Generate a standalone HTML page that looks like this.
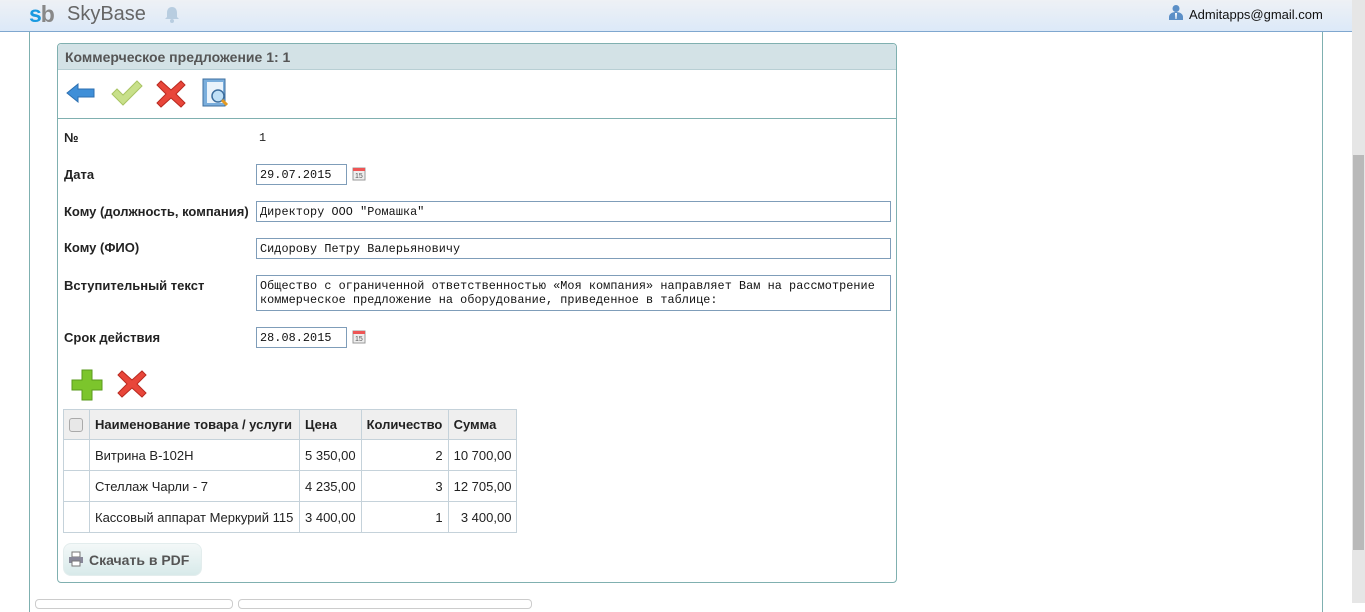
<!DOCTYPE html>
<html><head><meta charset="utf-8"><style>
*{margin:0;padding:0;box-sizing:border-box}
body{width:1365px;height:603px;overflow:hidden;background:#fff;font-family:"Liberation Sans",Arial,sans-serif;position:relative;font-size:13px;color:#222}
.hdr{position:absolute;left:0;top:0;width:1352px;height:32px;background:linear-gradient(#eef1f5,#dce9f8);border-bottom:1px solid #7fa7cf}
.abs{position:absolute}
.sb{position:absolute;right:0;top:0;width:13px;height:603px;background:#e6e6e6}
.thumb{position:absolute;right:1px;top:155px;width:11px;height:395px;background:#b9b9b9}
.outer{position:absolute;left:29px;top:32px;width:1294px;height:580px;border-left:1px solid #7fb0b0;border-right:1px solid #7fb0b0}
.panel{position:absolute;left:57px;top:43px;width:840px;height:540px;border:1px solid #80b0b0;border-radius:4px}
.ptitle{height:26px;background:#d3e2e6;border-bottom:1px solid #b8cfd4;font-weight:bold;color:#555;font-size:14px;padding:5px 0 0 7px;border-radius:4px 4px 0 0}
.lbl{position:absolute;left:64px;font-weight:bold;font-size:13px;color:#222}
.inp{position:absolute;left:256px;height:21px;border:1px solid #7f9db9;font-family:"Liberation Mono",monospace;font-size:11.8px;letter-spacing:0.07px;padding:3px 0 0 3px;color:#111;white-space:pre;line-height:14px}
table{position:absolute;left:63px;top:409px;border-collapse:collapse;font-size:13px}
td,th{border:1px solid #c5d2da;height:31px;padding:0 5px;white-space:nowrap}
th{background:#efefef;text-align:left;height:30px}
.r{text-align:right}
</style></head><body>
<div class="hdr">
<div class="abs" style="left:29px;top:1px;font-size:23px;font-weight:bold;letter-spacing:-1px"><span style="color:#1a9ae0">s</span><span style="color:#888">b</span></div>
<div class="abs" style="left:67px;top:3px;font-size:20px;color:#666">SkyBase</div>
<svg class="abs" style="left:164px;top:6px" width="16" height="17" viewBox="0 0 16 17"><path d="M8 1c3 0 5 2 5 6v4l2 2H1l2-2V7c0-4 2-6 5-6z" fill="#b8cde0"/><circle cx="8" cy="15" r="2" fill="#b8cde0"/></svg>
<svg class="abs" style="left:1168px;top:4px" width="16" height="16" viewBox="0 0 16 16"><circle cx="8" cy="4.5" r="3.5" fill="#5b8fc7"/><path d="M1 16v-3c0-3 3-5 7-5s7 2 7 5v3z" fill="#5b8fc7"/><path d="M7 9h2l-.5 6h-1z" fill="#fff"/></svg>
<div class="abs" style="left:1189px;top:7px;font-size:13px;color:#111">Admitapps@gmail.com</div>
</div>
<div class="sb"><div class="thumb"></div></div>
<div class="outer"></div>
<div class="panel">
<div class="ptitle">Коммерческое предложение 1: 1</div>
<div style="position:absolute;left:0;right:0;top:74px;border-top:1px solid #80b0b0"></div>
</div>
<svg class="abs" style="left:66px;top:82px" width="30" height="22" viewBox="0 0 30 22"><path d="M1 11L12 2v5h16v8H12v5z" fill="#3f8fd8" stroke="#2c6fb0"/></svg>
<svg class="abs" style="left:110px;top:80px" width="34" height="26" viewBox="0 0 34 26"><path d="M2 14l5-5 6 6L27 1l5 5-19 19z" fill="#c8e08a" stroke="#a9c463"/></svg>
<svg class="abs" style="left:155px;top:79px" width="32" height="30" viewBox="0 0 32 30"><path d="M2 6l4-4 10 9 10-9 4 4-9 9 9 9-4 4-10-9-10 9-4-4 9-9z" fill="#e8463a" stroke="#b92a20"/></svg>
<svg class="abs" style="left:200px;top:77px" width="32" height="32" viewBox="0 0 32 32"><rect x="3" y="2" width="22" height="27" fill="#7aaedc" stroke="#3d6f9f"/><rect x="7" y="5" width="16" height="21" fill="#eaf3fb"/><circle cx="18" cy="19" r="6" fill="#bfe0f7" stroke="#3d6f9f" stroke-width="1.5"/><path d="M22 23l5 5" stroke="#e49a22" stroke-width="3"/></svg>
<div class="lbl" style="top:130px">№</div><div class="abs" style="left:259px;top:131px;font-family:'Liberation Mono',monospace;font-size:11.8px">1</div>
<div class="lbl" style="top:167px">Дата</div><div class="inp" style="top:164px;width:91px">29.07.2015</div>
<svg class="abs" style="left:352px;top:166px" width="14" height="15" viewBox="0 0 14 15"><rect x="1" y="2" width="12" height="12" fill="#eee" stroke="#999"/><rect x="1" y="2" width="12" height="3" fill="#e55"/><text x="3" y="12" font-size="7" font-family="Liberation Sans" fill="#555">15</text></svg>
<div class="lbl" style="top:204px">Кому (должность, компания)</div><div class="inp" style="top:201px;width:635px">Директору ООО "Ромашка"</div>
<div class="lbl" style="top:240px">Кому (ФИО)</div><div class="inp" style="top:238px;width:635px">Сидорову Петру Валерьяновичу</div>
<div class="lbl" style="top:278px">Вступительный текст</div><div class="inp" style="top:275px;width:635px;height:36px">Общество с ограниченной ответственностью «Моя компания» направляет Вам на рассмотрение
коммерческое предложение на оборудование, приведенное в таблице:</div>
<div class="lbl" style="top:330px">Срок действия</div><div class="inp" style="top:327px;width:91px">28.08.2015</div>
<svg class="abs" style="left:352px;top:329px" width="14" height="15" viewBox="0 0 14 15"><rect x="1" y="2" width="12" height="12" fill="#eee" stroke="#999"/><rect x="1" y="2" width="12" height="3" fill="#e55"/><text x="3" y="12" font-size="7" font-family="Liberation Sans" fill="#555">15</text></svg>
<svg class="abs" style="left:71px;top:369px" width="32" height="32" viewBox="0 0 32 32"><path d="M11 1h10v10h10v10H21v10H11V21H1V11h10z" fill="#7cc52c" stroke="#5a9a1c"/></svg>
<svg class="abs" style="left:116px;top:369px" width="32" height="30" viewBox="0 0 32 30"><path d="M2 6l4-4 10 9 10-9 4 4-9 9 9 9-4 4-10-9-10 9-4-4 9-9z" fill="#e8463a" stroke="#b92a20"/></svg>
<table>
<tr><th style="width:26px;padding:0 5px"><div style="width:14px;height:14px;border:1px solid #aaa;border-radius:3px;background:#e8e8e8"></div></th><th style="width:210px">Наименование товара / услуги</th><th style="width:61px">Цена</th><th style="width:87px">Количество</th><th style="width:68px">Сумма</th></tr>
<tr><td></td><td>Витрина В-102Н</td><td>5 350,00</td><td class="r">2</td><td class="r">10 700,00</td></tr>
<tr><td></td><td>Стеллаж Чарли - 7</td><td>4 235,00</td><td class="r">3</td><td class="r">12 705,00</td></tr>
<tr><td></td><td>Кассовый аппарат Меркурий 115</td><td>3 400,00</td><td class="r">1</td><td class="r">3 400,00</td></tr>
</table>
<div class="abs" style="left:63px;top:543px;width:139px;height:33px;border-radius:8px;background:linear-gradient(#f3f8f8,#d8eaea);border:1px solid #e3eded;font-weight:bold;font-size:14px;color:#555;padding:8px 0 0 25px">Скачать в PDF</div>
<svg class="abs" style="left:68px;top:551px" width="16" height="16" viewBox="0 0 16 16"><rect x="4" y="1" width="8" height="5" fill="#fff" stroke="#777"/><rect x="1" y="6" width="14" height="6" fill="#889" /><rect x="4" y="10" width="8" height="5" fill="#fff" stroke="#777"/></svg>
<div class="abs" style="left:35px;top:599px;width:198px;height:10px;border:1px solid #ccc;border-radius:4px"></div>
<div class="abs" style="left:238px;top:599px;width:294px;height:10px;border:1px solid #ccc;border-radius:4px"></div>
</body></html>
